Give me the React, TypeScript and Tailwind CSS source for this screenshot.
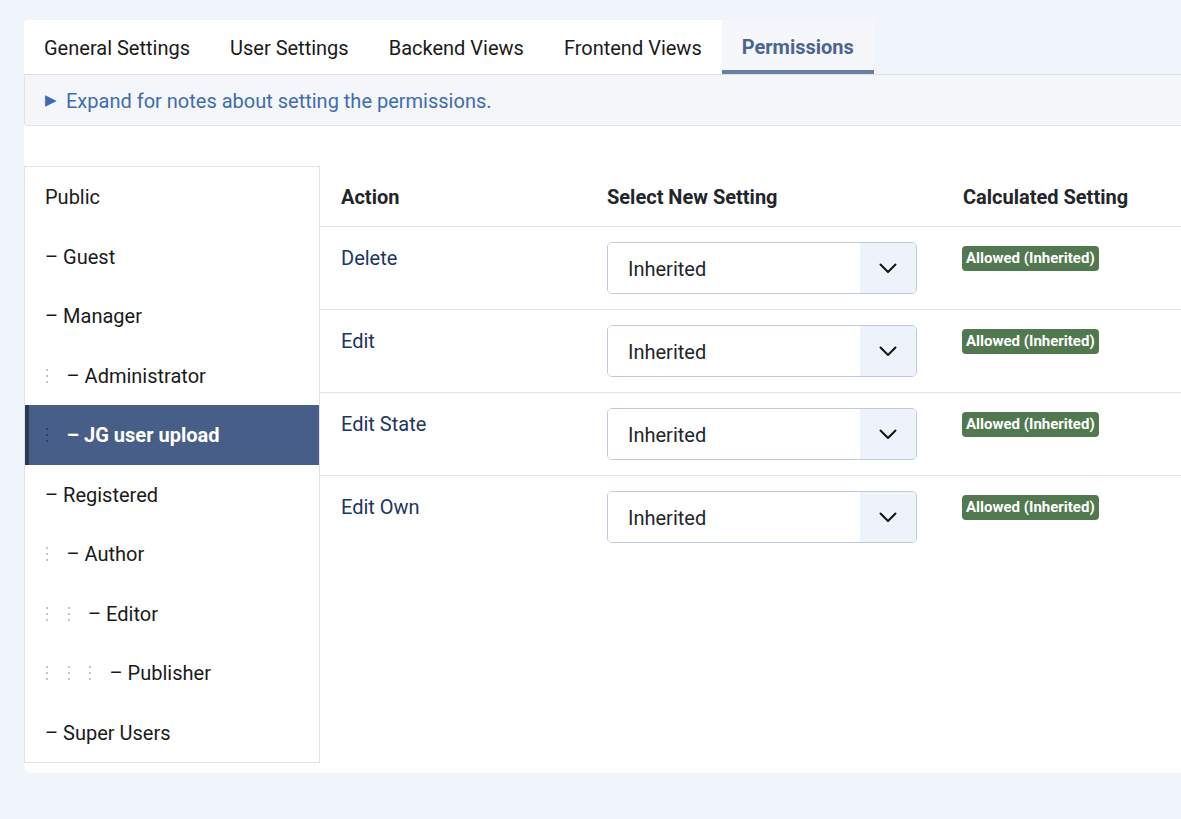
import * as React from "react";

const tabs = ["General Settings", "User Settings", "Backend Views", "Frontend Views"];

const groups: { name: string; depth: number; dots: number; active?: boolean }[] = [
  { name: "Public", depth: 0, dots: 0 },
  { name: "Guest", depth: 1, dots: 0 },
  { name: "Manager", depth: 1, dots: 0 },
  { name: "Administrator", depth: 2, dots: 1 },
  { name: "JG user upload", depth: 2, dots: 1, active: true },
  { name: "Registered", depth: 1, dots: 0 },
  { name: "Author", depth: 2, dots: 1 },
  { name: "Editor", depth: 3, dots: 2 },
  { name: "Publisher", depth: 4, dots: 3 },
  { name: "Super Users", depth: 1, dots: 0 },
];

const actions = ["Delete", "Edit", "Edit State", "Edit Own"];

function Dots({ dark }: { dark?: boolean }) {
  return (
    <span className="inline-flex w-[21.5px] shrink-0">
      <svg width="4" height="18" viewBox="0 0 4 18" className={dark ? "text-[#2c3b57]" : "text-[#b5b8bc]"}>
        <circle cx="2" cy="3" r="1.1" fill="currentColor" />
        <circle cx="2" cy="9" r="1.1" fill="currentColor" />
        <circle cx="2" cy="15" r="1.1" fill="currentColor" />
      </svg>
    </span>
  );
}

function Chevron() {
  return (
    <svg width="20" height="20" viewBox="0 0 20 20" fill="none">
      <path d="M2.5 6.5l7.5 7.5 7.5-7.5" stroke="#111" strokeWidth="2" strokeLinecap="round" strokeLinejoin="round" />
    </svg>
  );
}

export default function App() {
  return (
    <div
      className="min-h-[819px] w-full overflow-hidden bg-[#f0f4fb] pl-[24px] pt-[20px] text-[#22262a]"
      style={{ fontFamily: "Roboto, 'Liberation Sans', sans-serif" }}
    >
      <div className="w-[1200px]">
        {/* Tabs */}
        <div className="flex border-b border-[#dbe2ee]">
          <div className="flex bg-white rounded-tl-[4px]">
            {tabs.map((t) => (
              <div key={t} className="flex h-[54px] items-center px-[20px] pt-[1px] text-[20px] text-[#1a1a1a]">
                {t}
              </div>
            ))}
          </div>
          <div className="flex h-[54px] items-center border-b-4 border-[#687fa3] bg-[#f5f7fb] px-[20px] pt-[4px] text-[20px] font-bold text-[#4b6591]">
            Permissions
          </div>
        </div>

        {/* Card */}
        <div className="rounded-b-[8px] bg-white pb-[10px]">
          <div className="flex h-[51px] items-center rounded-b-[4px] border border-t-0 border-[#dfe3ea] bg-[#f4f6fa] pl-[20px] pt-[1px] text-[20px] text-[#3f6cb0]">
            <span className="mr-[9px] text-[15px]">▶</span>
            Expand for notes about setting the permissions.
          </div>

          <div className="mt-[40px] flex">
            {/* Group tree */}
            <div className="w-[296px] shrink-0 border border-[#dfe3e7]">
              {groups.map((g) => (
                <div
                  key={g.name}
                  className={
                    g.active
                      ? "flex h-[59.5px] items-center border-l-4 border-[#2b3a55] bg-[#475f88] pl-[16px] pt-[1px] text-[20px] font-bold text-white"
                      : "flex h-[59.5px] items-center pl-[20px] pt-[1px] text-[20px] text-[#1a1a1a]"
                  }
                >
                  {Array.from({ length: g.dots }).map((_, i) => (
                    <Dots key={i} dark={g.active} />
                  ))}
                  <span className="whitespace-pre">{g.depth > 0 ? "– " + g.name : g.name}</span>
                </div>
              ))}
            </div>

            {/* Permissions table */}
            <div className="flex-1">
              <div className="flex h-[61px] items-center border-b border-[#dfe3e7] pt-[1px] text-[20px] font-bold">
                <div className="w-[266px] pl-[21px]">Action</div>
                <div className="w-[356px] pl-[21px]">Select New Setting</div>
                <div className="pl-[21px]">Calculated Setting</div>
              </div>
              {actions.map((a, i) => (
                <div
                  key={a}
                  className={
                    i < actions.length - 1
                      ? "flex h-[83px] border-b border-[#dfe3e7]"
                      : "flex h-[83px]"
                  }
                >
                  <div className="w-[266px] pl-[21px] pt-[16px] text-[20px] text-[#1d3561]">{a}</div>
                  <div className="w-[356px] pl-[21px] pt-[15px]">
                    <div className="flex h-[52px] w-[310px] overflow-hidden rounded-[5px] border border-[#bccadf]">
                      <div className="flex flex-1 items-center bg-white pl-[20px] pt-[1px] text-[20px] text-[#22262a]">Inherited</div>
                      <div className="flex w-[56px] items-center justify-center bg-[#eef2fa]">
                        <Chevron />
                      </div>
                    </div>
                  </div>
                  <div className="pl-[20px] pt-[19px]">
                    <span className="inline-flex h-[25px] items-center rounded-[4px] bg-[#52784f] px-[4px] text-[15px] font-bold text-white">
                      Allowed (Inherited)
                    </span>
                  </div>
                </div>
              ))}
            </div>
          </div>
        </div>
      </div>
    </div>
  );
}
